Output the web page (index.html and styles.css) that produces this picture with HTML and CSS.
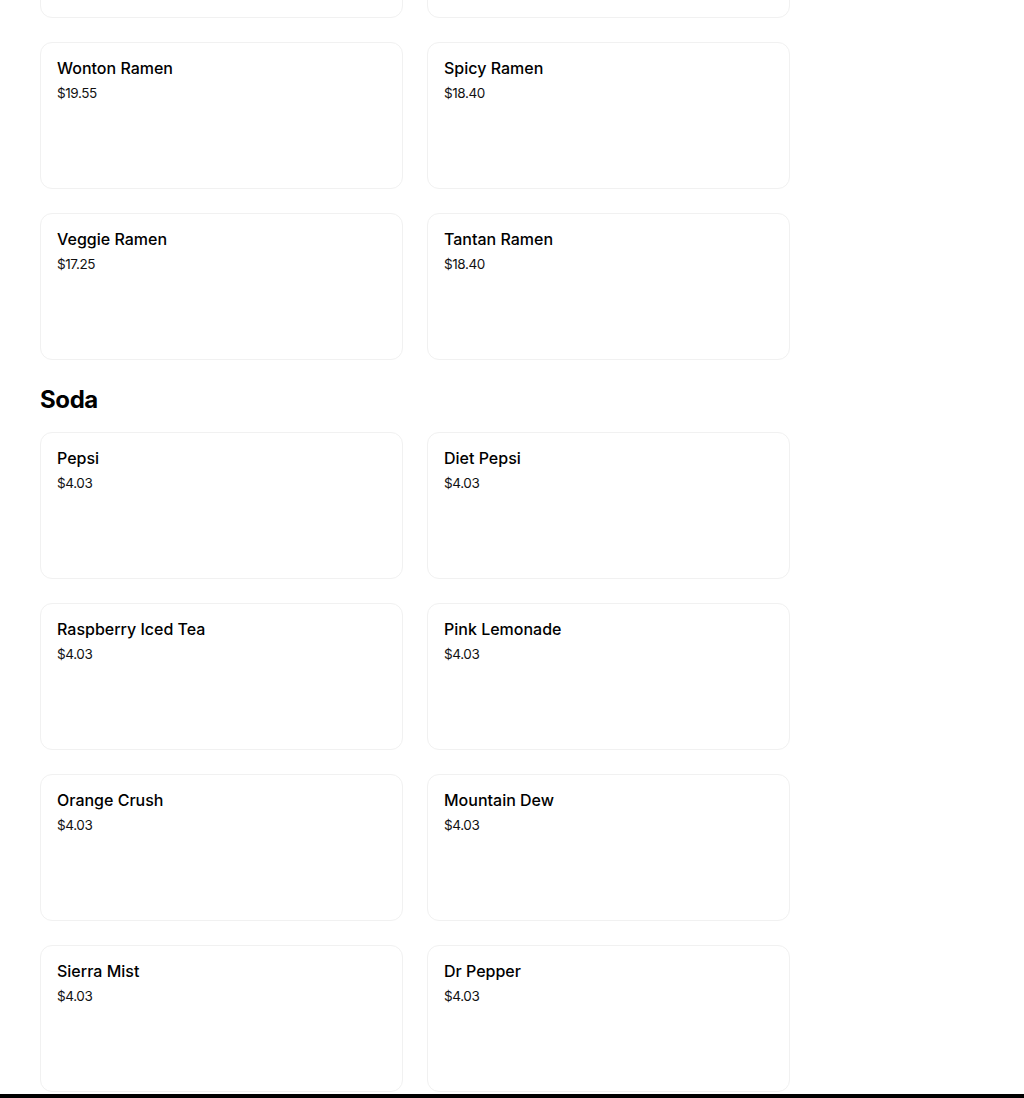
FILE: index.html
```html
<!DOCTYPE html>
<html>
<head>
<meta charset="utf-8">
<link rel="stylesheet" href="styles.css">
</head>
<body>
<main class="menu">
  <section class="section section-cut">
    <div class="grid">
      <div class="card"></div>
      <div class="card"></div>
      <div class="card"><div class="title">Wonton Ramen</div><div class="price">$19.55</div></div>
      <div class="card"><div class="title">Spicy Ramen</div><div class="price">$18.40</div></div>
      <div class="card"><div class="title">Veggie Ramen</div><div class="price">$17.25</div></div>
      <div class="card"><div class="title">Tantan Ramen</div><div class="price">$18.40</div></div>
    </div>
  </section>
  <section class="section">
    <h2 class="heading">Soda</h2>
    <div class="grid">
      <div class="card"><div class="title">Pepsi</div><div class="price">$4.03</div></div>
      <div class="card"><div class="title">Diet Pepsi</div><div class="price">$4.03</div></div>
      <div class="card"><div class="title">Raspberry Iced Tea</div><div class="price">$4.03</div></div>
      <div class="card"><div class="title">Pink Lemonade</div><div class="price">$4.03</div></div>
      <div class="card"><div class="title">Orange Crush</div><div class="price">$4.03</div></div>
      <div class="card"><div class="title">Mountain Dew</div><div class="price">$4.03</div></div>
      <div class="card"><div class="title">Sierra Mist</div><div class="price">$4.03</div></div>
      <div class="card"><div class="title">Dr Pepper</div><div class="price">$4.03</div></div>
    </div>
  </section>
</main>
<div class="bottom-bar"></div>
</body>
</html>
```
FILE: styles.css
```css
html, body {
  margin: 0;
  padding: 0;
  background: #fff;
  overflow: hidden;
}
body {
  font-family: Inter, "Liberation Sans", sans-serif;
  color: #000;
}
.menu {
  padding-left: 40px;
  width: 750px;
}
.section-cut {
  margin-top: -129px;
}
.grid {
  display: grid;
  grid-template-columns: 363px 363px;
  column-gap: 24px;
  row-gap: 24px;
}
.card {
  box-sizing: border-box;
  height: 147px;
  border: 1px solid #f1f1f1;
  border-radius: 12px;
  padding: 13px 16px;
}
.title {
  font-size: 16px;
  font-weight: 500;
  line-height: 24px;
  letter-spacing: 0;
}
.price {
  margin-top: 3px;
  font-size: 13.5px;
  font-weight: 400;
  line-height: 20px;
  letter-spacing: -0.4px;
  color: #111;
}
.heading {
  margin: 24px 0 16px;
  font-size: 24px;
  line-height: 32px;
  font-weight: 700;
  letter-spacing: -0.4px;
}
.bottom-bar {
  position: fixed;
  left: 0;
  right: 0;
  bottom: 0;
  height: 4px;
  background: #000;
}
```
